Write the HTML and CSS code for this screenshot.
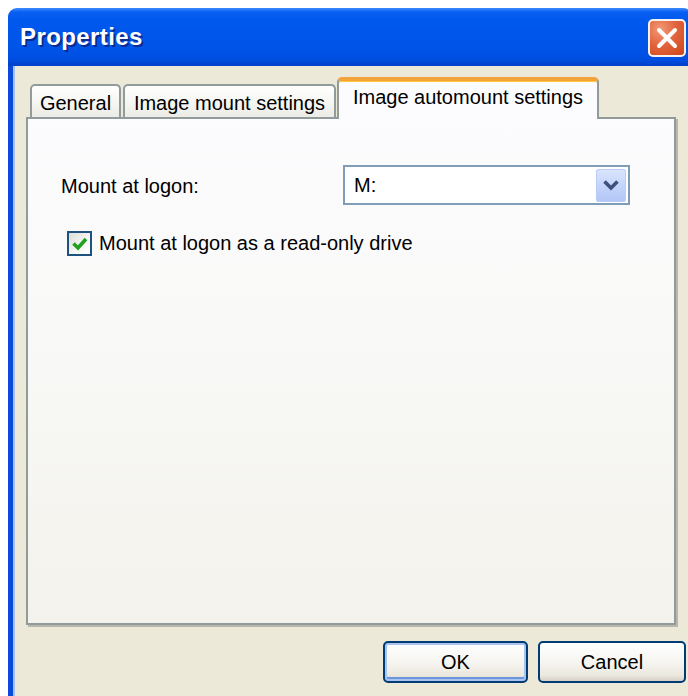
FILE: index.html
```html
<!DOCTYPE html>
<html>
<head>
<meta charset="utf-8">
<title>Properties</title>
<link rel="stylesheet" href="styles.css">
</head>
<body>
<div class="window">
  <div class="titlebar">
    <span class="title">Properties</span>
    <button class="close" aria-label="Close">
      <svg width="24" height="24" viewBox="0 0 24 24">
        <path d="M4 4 L20 20 M20 4 L4 20" stroke="#fff" stroke-width="4" stroke-linecap="round" fill="none"/>
      </svg>
    </button>
  </div>
  <div class="client">
    <div class="tabs">
      <div class="tab tab-general">General</div>
      <div class="tab tab-mount">Image mount settings</div>
      <div class="tab tab-active">Image automount settings</div>
    </div>
    <div class="panel">
      <div class="row">
        <span class="label">Mount at logon:</span>
        <div class="combo">
          <span class="combo-value">M:</span>
          <span class="combo-btn">
            <svg width="18" height="14" viewBox="0 0 18 14">
              <path d="M2.5 3.5 L9 10 L15.5 3.5" stroke="#3f507a" stroke-width="3.6" fill="none"/>
            </svg>
          </span>
        </div>
      </div>
      <label class="check-row">
        <span class="checkbox">
          <svg width="20" height="20" viewBox="0 0 20 20">
            <path d="M3.5 9.5 L8 14 L16 5" stroke="#21a121" stroke-width="3.6" fill="none"/>
          </svg>
        </span>
        <span class="check-text">Mount at logon as a read-only drive</span>
      </label>
    </div>
    <div class="buttons">
      <button class="btn btn-default">OK</button>
      <button class="btn">Cancel</button>
    </div>
  </div>
</div>
</body>
</html>
```
FILE: styles.css
```css
html, body {
  margin: 0;
  padding: 0;
  background: #ffffff;
  overflow: hidden;
  width: 688px;
  height: 696px;
}

.window {
  margin: 8px 0 0 8px;
  width: 684px;
  height: 700px;
  background: #ece9d8;
  border-radius: 9px 9px 0 0;
  overflow: hidden;
  font-family: "Liberation Sans", Arial, sans-serif;
  color: #000;
  display: flex;
  flex-direction: column;
}

/* blue caption bar */
.titlebar {
  height: 58px;
  flex: none;
  display: flex;
  align-items: center;
  justify-content: space-between;
  padding: 0 6px 0 12px;
  background: linear-gradient(180deg, #3d8bff 0px, #0a5ff2 4px, #0058ee 12px, #0054e8 40px, #004ee0 52px, #0040c8 58px);
}

.title {
  color: #fff;
  font-weight: bold;
  font-size: 24px;
  letter-spacing: 0.4px;
  text-shadow: 2px 2px 0 #0b2b8f;
  margin-top: -1px;
}

.close {
  width: 38px;
  height: 38px;
  padding: 0;
  margin-top: 2px;
  border: 2px solid #f4f4f4;
  border-radius: 5px;
  background: radial-gradient(circle at 30% 25%, #f39a78 0%, #e2653f 45%, #cc4516 100%);
  display: flex;
  align-items: center;
  justify-content: center;
}

/* window body with blue frame on the left */
.client {
  flex: 1;
  border-left: 5px solid #0b49dc;
  box-shadow: inset 2px 0 0 #a8c0ec;
  padding: 11px 6px 0 13px;
  display: flex;
  flex-direction: column;
}

.tabs {
  display: flex;
  align-items: flex-end;
  height: 40px;
  padding-left: 4px;
  position: relative;
  z-index: 1;
}

.tab {
  font-size: 20px;
  height: 33px;
  box-sizing: border-box;
  border: 2px solid #919b9c;
  border-bottom: none;
  border-radius: 5px 5px 0 0;
  background: linear-gradient(180deg, #ffffff 0%, #f4f4f0 60%, #ecebe6 100%);
  display: flex;
  align-items: center;
  justify-content: center;
  padding-top: 3px;
}

.tab-general {
  width: 91px;
}

.tab-mount {
  width: 213px;
  margin-left: 2px;
}

.tab-active {
  width: 262px;
  height: 42px;
  margin-bottom: -2px;
  margin-left: 1px;
  background: #fcfcfe;
  border-top: 4px solid #f2a33a;
  box-shadow: inset 0 1px 0 #ffc83c;
  padding-top: 0;
  padding-bottom: 6px;
}

.panel {
  width: 650px;
  height: 508px;
  box-sizing: border-box;
  border: 2px solid #919b9c;
  background: linear-gradient(180deg, #fcfcfe 0%, #f8f8f6 50%, #f3f2ec 100%);
  box-shadow: 2px 2px 0 #b9b7ab;
  padding: 46px 0 0 33px;
  display: flex;
  flex-direction: column;
}

.row {
  display: flex;
  align-items: center;
  height: 40px;
}

.label {
  font-size: 20px;
  width: 282px;
  padding-top: 2px;
}

.combo {
  width: 287px;
  height: 40px;
  box-sizing: border-box;
  border: 2px solid #7f9db9;
  background: #fff;
  display: flex;
  align-items: center;
  justify-content: space-between;
  padding: 0 2px 0 9px;
}

.combo-value {
  font-size: 20px;
}

.combo-btn {
  width: 30px;
  height: 33px;
  border-radius: 3px;
  background: linear-gradient(180deg, #dce6fd 0%, #c4d5fb 50%, #b2c6f5 100%);
  box-shadow: inset 0 0 0 1px #bacdf8;
  display: flex;
  align-items: center;
  justify-content: center;
}

.check-row {
  display: flex;
  align-items: center;
  margin-top: 26px;
  margin-left: 6px;
}

.checkbox {
  width: 25px;
  height: 25px;
  box-sizing: border-box;
  border: 2px solid #1c5180;
  background: linear-gradient(135deg, #dcdcd7 0%, #f6f6f4 60%, #ffffff 100%);
  display: flex;
  align-items: center;
  justify-content: center;
}

.check-text {
  font-size: 20px;
  margin-left: 7px;
}

.buttons {
  display: flex;
  justify-content: flex-end;
  gap: 10px;
  margin-top: 16px;
}

.btn {
  font-family: "Liberation Sans", Arial, sans-serif;
  font-size: 20px;
  color: #000;
  width: 148px;
  height: 42px;
  border: 2px solid #003c74;
  border-radius: 5px;
  background: linear-gradient(180deg, #ffffff 0%, #f6f5f1 50%, #ebe8de 85%, #d6d0c5 100%);
  padding: 0;
}

.btn-default {
  width: 145px;
  box-shadow: inset 0 0 0 2px #a9c4ef, inset 0 -2px 0 2px #6d95dd;
}
```
